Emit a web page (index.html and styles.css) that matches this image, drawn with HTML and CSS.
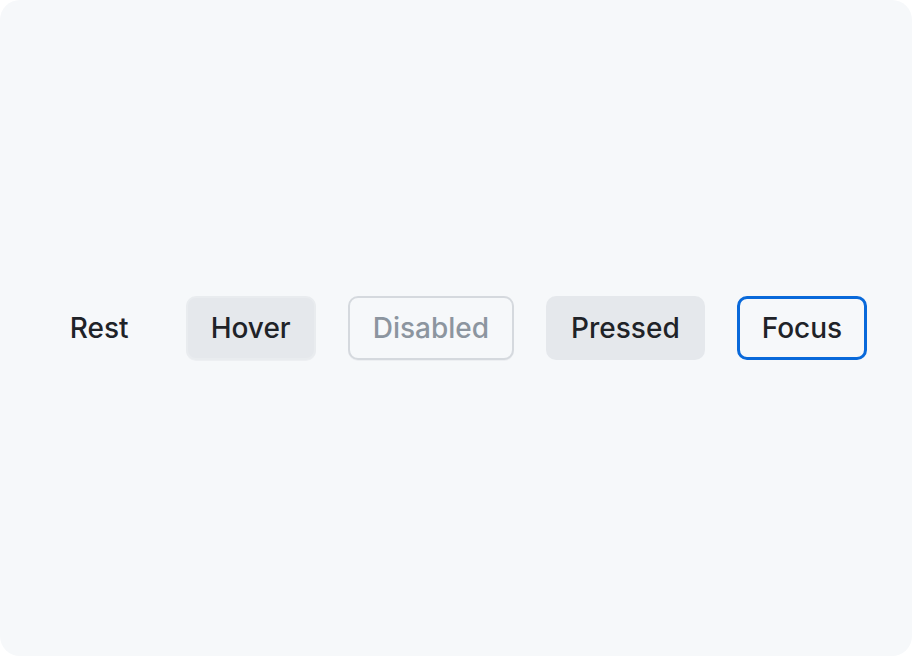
FILE: index.html
```html
<!DOCTYPE html>
<html>
<head>
<meta charset="utf-8">
<link rel="stylesheet" href="styles.css">
</head>
<body>
<div class="canvas">
  <div class="row">
    <button class="btn">Rest</button>
    <button class="btn hover">Hover</button>
    <button class="btn disabled" disabled>Disabled</button>
    <button class="btn pressed">Pressed</button>
    <button class="btn focus">Focus</button>
  </div>
</div>
</body>
</html>
```
FILE: styles.css
```css
html, body { margin: 0; padding: 0; background: #ffffff; }
.canvas {
  width: 912px;
  height: 656px;
  background: #f6f8fa;
  border-radius: 20px;
  display: flex;
  align-items: center;
  justify-content: center;
}
.row { display: flex; gap: 32px; align-items: center; }
.btn {
  font-family: Inter, "Noto Sans", sans-serif;
  font-size: 28px;
  font-weight: 500;
  color: #1f2328;
  height: 64px;
  padding: 0 23px;
  border: 2px solid transparent;
  border-radius: 10px;
  background: transparent;
  box-sizing: border-box;
  line-height: 1;
}
.hover { background: #e5e8ec; border-color: #e9ecef; box-shadow: 0 1px 0 rgba(31,35,40,0.04); }
.disabled { border-color: #d5d9de; color: #8c959f; background: #f6f8fa; box-shadow: 0 1px 0 rgba(31,35,40,0.04); }
.pressed { background: #e5e8ec; }
.focus { border: 3px solid #0969da; padding: 0 22px; }
```
